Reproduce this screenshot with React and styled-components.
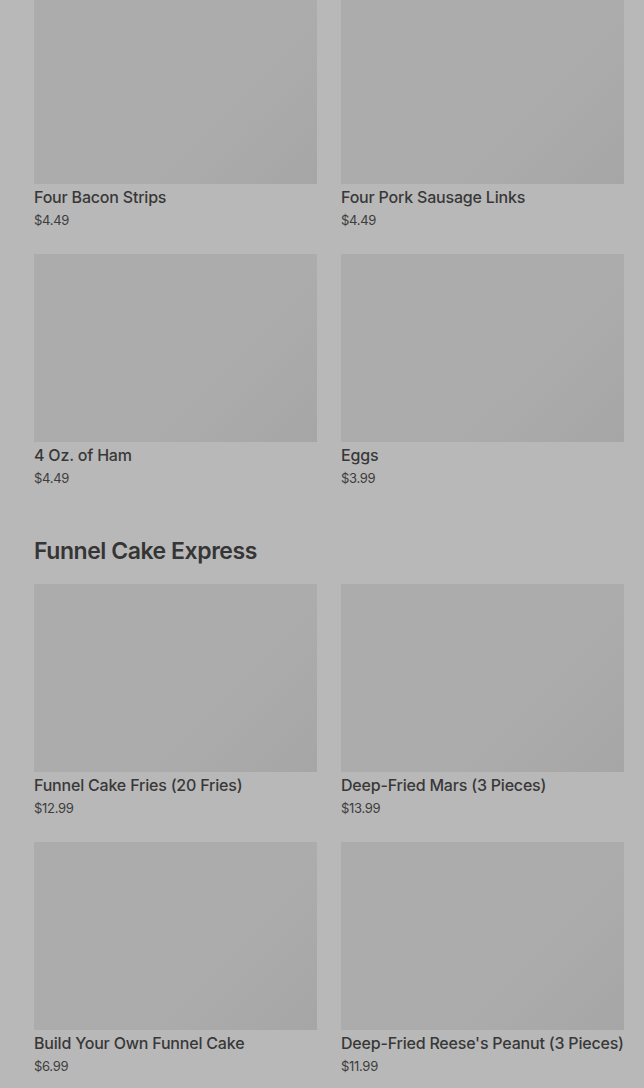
import React from "react";
import styled, { createGlobalStyle } from "styled-components";

const Global = createGlobalStyle`
  html, body { margin: 0; padding: 0; background: #b8b8b8; }
  body { font-family: Inter, "Noto Sans", Arial, sans-serif; overflow: hidden; }
`;

const Page = styled.div`
  margin-top: -4px;
  padding: 0 20px 0 34px;
`;

const Section = styled.section`
  display: flex;
  flex-direction: column;
`;

const Heading = styled.h2`
  margin: 49px 0 19px;
  font-size: 23px;
  line-height: 28px;
  font-weight: 600;
  letter-spacing: -0.45px;
  color: #353535;
`;

const Grid = styled.div`
  display: grid;
  grid-template-columns: 283px 283px;
  column-gap: 24px;
  row-gap: 24px;
`;

const Card = styled.div`
  display: flex;
  flex-direction: column;
`;

const Thumb = styled.div`
  height: 188px;
  background: linear-gradient(135deg, #acacac 0%, #acacac 62%, #a6a6a6 100%);
`;

const Name = styled.div`
  margin-top: 2px;
  font-size: 16px;
  line-height: 22px;
  font-weight: 500;
  letter-spacing: -0.2px;
  color: #383838;
  white-space: nowrap;
`;

const Price = styled.div`
  margin-top: 2px;
  font-size: 13px;
  line-height: 20px;
  font-weight: 400;
  color: #3d3d3d;
  letter-spacing: -0.3px;
`;

const first = [
  ["Four Bacon Strips", "$4.49"],
  ["Four Pork Sausage Links", "$4.49"],
  ["4 Oz. of Ham", "$4.49"],
  ["Eggs", "$3.99"],
];
const funnel = [
  ["Funnel Cake Fries (20 Fries)", "$12.99"],
  ["Deep-Fried Mars (3 Pieces)", "$13.99"],
  ["Build Your Own Funnel Cake", "$6.99"],
  ["Deep-Fried Reese's Peanut (3 Pieces)", "$11.99"],
];

const Items = ({ items }) => (
  <Grid>
    {items.map(([n, p]) => (
      <Card key={n}>
        <Thumb />
        <Name>{n}</Name>
        <Price>{p}</Price>
      </Card>
    ))}
  </Grid>
);

export default function App() {
  return (
    <>
      <Global />
      <Page>
        <Section>
          <Items items={first} />
        </Section>
        <Section>
          <Heading>Funnel Cake Express</Heading>
          <Items items={funnel} />
        </Section>
      </Page>
    </>
  );
}
